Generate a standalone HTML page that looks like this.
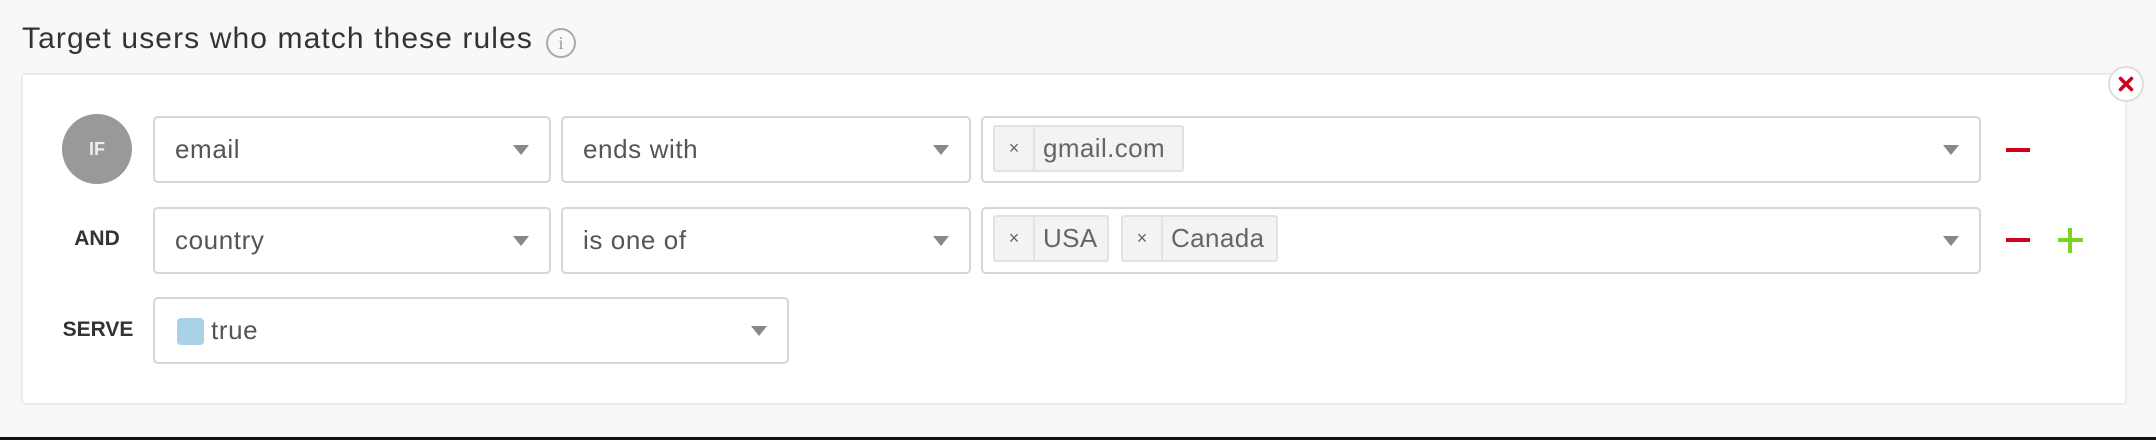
<!DOCTYPE html>
<html><head><style>
body{margin:0;width:2156px;height:440px;background:#f8f8f8;position:relative;overflow:hidden;font-family:"Liberation Sans",Helvetica,Arial,sans-serif;}
.a{position:absolute;box-sizing:border-box;}
.title{left:22px;top:22px;font-size:30px;letter-spacing:1.1px;color:#333;white-space:nowrap;}
.panel{left:21px;top:73px;width:2106px;height:332px;background:#fff;border:2px solid #ececec;border-radius:4px;}
.box{background:#fff;border:2px solid #d6d6d6;border-radius:5px;font-size:26px;letter-spacing:0.6px;color:#555;line-height:63px;padding-left:20px;}
.arr{position:absolute;width:0;height:0;border-left:8px solid transparent;border-right:8px solid transparent;border-top:10px solid #888;top:27px;}
.lbl{font-size:21px;font-weight:bold;color:#333;text-align:center;}
.tag{background:#f3f3f3;border:2px solid #e2e2e2;border-radius:3px;height:47px;font-size:26px;letter-spacing:0.4px;color:#666;line-height:43px;}
.tag .x{position:absolute;left:0;top:0;width:38px;height:43px;border-right:2px solid #e2e2e2;text-align:center;font-size:18px;color:#666;letter-spacing:0;}
.tag .t{position:absolute;left:48px;top:0;}
.minus{width:24px;height:4px;background:#d0021b;}
</style></head><body>
<div class="a title">Target users who match these rules</div>
<div class="a" style="left:546px;top:28px;width:30px;height:30px;border:2px solid #aaa;border-radius:50%;color:#999;font-size:18px;text-align:center;line-height:26px;font-family:'Liberation Serif',serif;">i</div>
<div class="a panel"></div>
<div class="a" style="left:2108px;top:66px;width:36px;height:36px;border:2px solid #ddd;border-radius:50%;background:#fff;">
<svg width="32" height="32" style="position:absolute;left:0;top:0"><path d="M10.5 10.5L21.5 21.5M21.5 10.5L10.5 21.5" stroke="#d0021b" stroke-width="3.5" stroke-linecap="round"/></svg></div>

<div class="a" style="left:62px;top:114px;width:70px;height:70px;border-radius:50%;background:#999;color:#eee;font-size:18px;font-weight:bold;text-align:center;line-height:70px;">IF</div>
<div class="a box" style="left:153px;top:116px;width:398px;height:67px;">email<div class="arr" style="left:358px"></div></div>
<div class="a box" style="left:561px;top:116px;width:410px;height:67px;">ends with<div class="arr" style="left:370px"></div></div>
<div class="a box" style="left:981px;top:116px;width:1000px;height:67px;"><div class="arr" style="left:960px"></div></div>
<div class="a tag" style="left:993px;top:125px;width:191px;"><div class="x">×</div><div class="t">gmail.com</div></div>
<div class="a minus" style="left:2006px;top:148px;"></div>

<div class="a lbl" style="left:60px;top:227px;width:74px;">AND</div>
<div class="a box" style="left:153px;top:207px;width:398px;height:67px;">country<div class="arr" style="left:358px"></div></div>
<div class="a box" style="left:561px;top:207px;width:410px;height:67px;">is one of<div class="arr" style="left:370px"></div></div>
<div class="a box" style="left:981px;top:207px;width:1000px;height:67px;"><div class="arr" style="left:960px"></div></div>
<div class="a tag" style="left:993px;top:215px;width:116px;"><div class="x">×</div><div class="t">USA</div></div>
<div class="a tag" style="left:1121px;top:215px;width:157px;"><div class="x">×</div><div class="t">Canada</div></div>
<div class="a minus" style="left:2006px;top:238px;"></div>
<div class="a" style="left:2058px;top:238px;width:25px;height:4px;background:#7ed321;"></div>
<div class="a" style="left:2068px;top:228px;width:4px;height:25px;background:#7ed321;"></div>

<div class="a lbl" style="left:58px;top:318px;width:80px;">SERVE</div>
<div class="a box" style="left:153px;top:297px;width:636px;height:67px;padding-left:56px;">true<div class="arr" style="left:596px"></div>
<div style="position:absolute;left:22px;top:19px;width:27px;height:27px;background:#a9d2e6;border-radius:4px;"></div></div>

<div class="a" style="left:0;top:437px;width:2156px;height:3px;background:#111;"></div>
</body></html>
